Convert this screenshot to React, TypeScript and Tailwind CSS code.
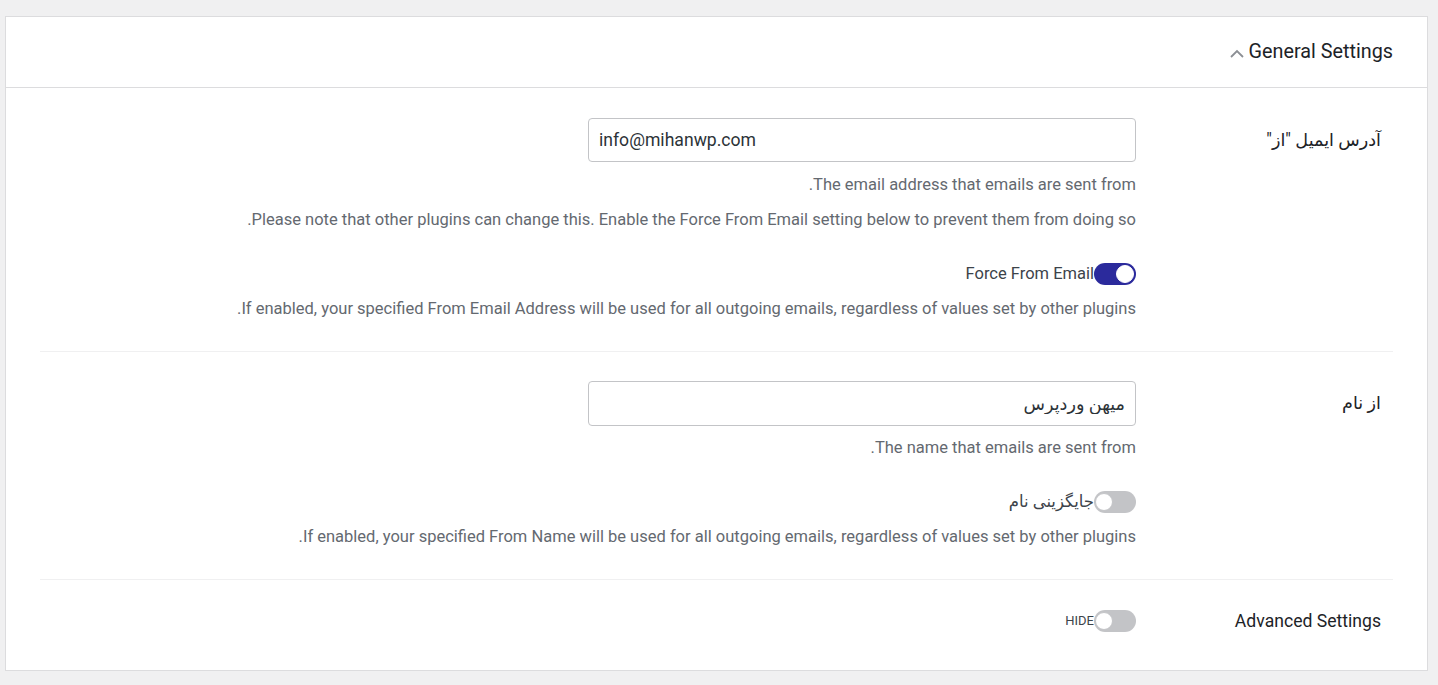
import { useState } from "react";

interface ToggleProps {
  on: boolean;
  onChange: (v: boolean) => void;
  label: string;
  small?: boolean;
}

const Toggle = ({ on, onChange, label, small }: ToggleProps) => (
  <label className="flex items-center h-[22px] cursor-pointer select-none">
    <button
      type="button"
      onClick={() => onChange(!on)}
      className={`relative w-[42px] h-[22px] rounded-full shrink-0 transition-colors ${
        on ? "bg-[#2b2a9c]" : "bg-[#c3c4c7]"
      }`}
    >
      <span
        className={`absolute top-[2px] w-[18px] h-[18px] rounded-full bg-white border border-[#c3c4c7] transition-all ${
          on ? "left-[22px] border-white" : "left-[1px]"
        }`}
      />
    </button>
    <span
      className={
        small
          ? "text-[13px] leading-[22px] text-[#3c434a] uppercase"
          : "text-[16.5px] leading-[22px] text-[#3c434a]"
      }
    >
      {label}
    </span>
  </label>
);

const Desc = ({ children }: { children: string }) => (
  <p className="text-[16.5px] leading-5 text-[#646970]">{children}</p>
);

const App = () => {
  const [forceEmail, setForceEmail] = useState(true);
  const [forceName, setForceName] = useState(false);
  const [advanced, setAdvanced] = useState(false);
  const [open, setOpen] = useState(true);

  return (
    <div
      className="min-h-screen bg-[#f0f0f1] pt-4 pl-[5px] pr-[10px]"
      style={{ fontFamily: "Roboto, 'Noto Sans', 'DejaVu Sans', sans-serif" }}
    >
      <div dir="rtl" className="bg-white border border-[#dcdcde]">
        <button
          onClick={() => setOpen(!open)}
          className="w-full h-[71px] flex items-center gap-1 px-[34px] border-b border-[#dcdcde]"
        >
          <span className="text-[19.8px] text-[#1d2327]">General Settings</span>
          <svg
            width="16"
            height="16"
            viewBox="0 0 16 16"
            className={`text-[#8c8f94] mt-1 ${open ? "" : "rotate-180"}`}
          >
            <path
              d="M2 11 L8 5 L14 11"
              fill="none"
              stroke="currentColor"
              strokeWidth="1.8"
            />
          </svg>
        </button>

        {open && (
          <div className="px-[34px]">
            <div className="flex pt-[30px] pb-[32px] border-b border-[#f0f0f1]">
              <div className="w-[257px] shrink-0 pr-3 h-[44px] flex items-center">
                <span className="text-[17.6px] text-[#1d2327]">آدرس ایمیل "از"</span>
              </div>
              <div className="flex-1 flex flex-col items-start">
                <input
                  dir="ltr"
                  defaultValue="info@mihanwp.com"
                  className="w-[548px] h-[44px] px-[10px] border border-[#c3c4c7] rounded-[4px] text-[17.6px] text-[#2c3338] outline-none"
                />
                <div className="mt-[13px] flex flex-col gap-[15px]">
                  <Desc>The email address that emails are sent from.</Desc>
                  <Desc>
                    Please note that other plugins can change this. Enable the Force From Email setting below to prevent them from doing so.
                  </Desc>
                </div>
                <div className="mt-[33px]">
                  <Toggle on={forceEmail} onChange={setForceEmail} label="Force From Email" />
                </div>
                <div className="mt-[14px]">
                  <Desc>
                    If enabled, your specified From Email Address will be used for all outgoing emails, regardless of values set by other plugins.
                  </Desc>
                </div>
              </div>
            </div>

            <div className="flex pt-[29px] pb-[32px] border-b border-[#f0f0f1]">
              <div className="w-[257px] shrink-0 pr-3 h-[45px] flex items-center">
                <span className="text-[17.6px] text-[#1d2327]">از نام</span>
              </div>
              <div className="flex-1 flex flex-col items-start">
                <input
                  defaultValue="میهن وردپرس"
                  className="w-[548px] h-[45px] px-[10px] border border-[#c3c4c7] rounded-[4px] text-[17.6px] text-[#2c3338] outline-none"
                />
                <div className="mt-[12px]">
                  <Desc>The name that emails are sent from.</Desc>
                </div>
                <div className="mt-[33px]">
                  <Toggle on={forceName} onChange={setForceName} label="جایگزینی نام" />
                </div>
                <div className="mt-[14px]">
                  <Desc>
                    If enabled, your specified From Name will be used for all outgoing emails, regardless of values set by other plugins.
                  </Desc>
                </div>
              </div>
            </div>

            <div className="flex pt-[30px] pb-[38px]">
              <div className="w-[257px] shrink-0 pr-3 h-[22px] flex items-center">
                <span className="text-[17.6px] text-[#1d2327]">Advanced Settings</span>
              </div>
              <div className="flex-1 flex items-center">
                <Toggle on={advanced} onChange={setAdvanced} label={advanced ? "Show" : "Hide"} small />
              </div>
            </div>
          </div>
        )}
      </div>
    </div>
  );
};

export default App;
